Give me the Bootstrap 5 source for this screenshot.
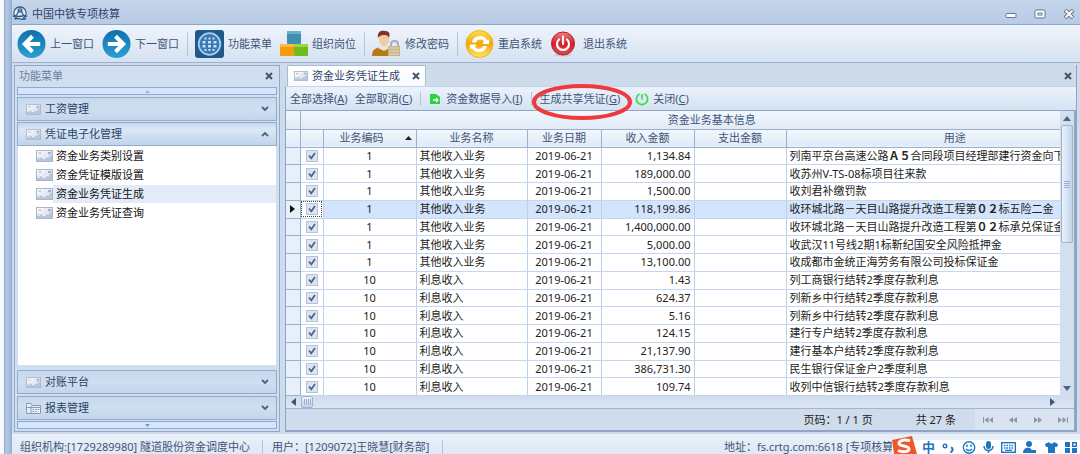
<!DOCTYPE html>
<html lang="zh-CN">
<head>
<meta charset="utf-8">
<meta name="viewport" content="width=device-width, initial-scale=1">
<title>中国中铁专项核算</title>
<link href="https://cdn.jsdelivr.net/npm/bootstrap@5.3.0/dist/css/bootstrap.min.css" rel="stylesheet">
<style>
  body { font-family: "Noto Sans", "Noto Sans CJK SC", sans-serif; font-size: 11px; line-height: 16px; color: #3f5478; background: #f7f8fa; }
  button { font: inherit; color: inherit; background: none; border: 0; padding: 0; white-space: nowrap; }
  svg { display: block; flex: none; }
  .edge { width: 4px; }
  .window { border-left: 1px solid #93a9c9; background: #cddbec; }
  .frame { width: 7px; background: linear-gradient(90deg, #b4c8e2, #a6bddb 70%, #8fa8cb); }
  .titlebar { height: 24px; background: linear-gradient(#c5d5ea, #b8cbe5); padding: 4px 5px 0 8px; color: #2f4468; }
  .titlebar nav { gap: 17px; }
  .brand { gap: 4px; }
  .main-tools { height: 39px; padding: 0 5px; background: linear-gradient(#eef4fc, #e3ebf6 50%, #d5e2f1); border-top: 1px solid #8fa5c3; border-bottom: 1px solid #9db1cd; }
  .tool { display: flex; align-items: center; gap: 4px; margin-right: 8px; }
  .vline { width: 1px; background: #b4c4da; margin-right: 7px; }
  .work { padding: 2px 3px 2px 2px; gap: 5px; }
  .menu-pane { width: 266px; border: 1px solid #8fa9cc; background: #d0deef; padding: 0 2px 2px; }
  .pane-title { height: 21px; padding: 0 4px 2px 2px; color: #6b7d99; }
  .scroller { height: 8px; border: 1px solid #8fabd3; background: #d6e5fb; margin-bottom: 1px; }
  .scroller svg { margin: auto; }
  .group-head { height: 24px; border: 1px solid #94abcb; background: linear-gradient(#c6d8ec, #cfdff0 50%, #c3d6ea); padding: 0 7px 0 8px; margin-top: 1px; text-align: left; width: 100%; color: #2c4266; gap: 4px; }
  .group-head.opened { background: linear-gradient(#c3d7ed, #dbe8f5 30%, #bfd3ea); }
  .group-list { background: #fff; margin: 0 1px 3px; list-style: none; padding: 0 0 0 18px; }
  .group-list ~ .group-head { margin-top: 2px; }
  .group-list ~ .scroller { margin: 1px 0 0; }
  .group-list li { height: 19px; display: flex; align-items: center; }
  .group-list a { color: #111; text-decoration: none; flex: 1; line-height: 18px; padding-left: 3px; }
  .group-list .chosen a { background: #e2ebf7; }
  .doc-pane { border-right: 1px solid #8fa5c3; border-bottom: 1px solid #8fa5c3; }
  .tabstrip { height: 21px; padding: 0 4px 0 2px; background: #cedbeb; }
  .doc-tab { background: linear-gradient(#fff, #f7fafe); border: 1px solid #a9bcd6; border-bottom: 0; width: 139px; padding: 0 5px; gap: 3px; color: #2f4468; }
  .doc-tools { height: 24px; border-top: 1px solid #c5d3e6; background: linear-gradient(#eaf2fc, #d5e2f1); padding: 0 4px; border-left: 1px solid #8fa5c3; }
  .doc-tools .vline { height: 14px; margin: 0 8px; }
  .ring { position: absolute; left: -9px; top: -9px; z-index: 2; pointer-events: none; }
  .grid-area { border: 1px solid #8fa5c3; border-right-width: 2px; }
  /* the last column runs on under the vertical scroll bar */
  .ledger { width: calc(100% + 63px); height: 285px; table-layout: fixed; border-collapse: collapse; background: #fff; color: #222; }
  .ledger th, .ledger td { height: 17px; padding: 0 3px; line-height: 16px; white-space: nowrap; overflow: hidden; border-right: 1px solid #b9d0ee; border-bottom: 1px solid #c3d8f0; }
  .ledger th { height: 18px; font-weight: 400; text-align: center; color: #3f5478; background: linear-gradient(#f2f7fd, #dfeaf6); border-color: #9bb0cd; position: relative; }
  .ledger th:last-child, .ledger td:last-child { border-right: 0; }
  .ledger .handle { background: #e6f0fb; border-color: #9bb0cd; padding: 0 4px; }
  .ledger .current td { background: #d3e5fc; }
  .ledger .current td.handle { background: #e6f0fb; }
  .ledger .current td.tick { outline: 1px dotted #444; outline-offset: -2px; background: #fff; }
  .ledger .tick { padding: 0; text-align: center; }
  .ledger input { appearance: none; display: block; width: 12px; height: 12px; margin: 0 auto; border: 1px solid #b7c4d8; background: #dbe4f0; }
  .ledger input:checked { background-image: url("data:image/svg+xml,%3Csvg xmlns='http://www.w3.org/2000/svg' viewBox='0 0 10 10'%3E%3Cpath d='M2 4.5L4.3 7.3L8 2' fill='none' stroke='%234c6285' stroke-width='1.7'/%3E%3C/svg%3E"); }
  .sort { position: absolute; right: 4px; top: 6px; }
  .vbar { width: 14px; background: #d3dfef; padding: 5px 0; }
  .vthumb { height: 118px; width: 12px; border: 1px solid #9fb3d0; border-radius: 2px; background: linear-gradient(90deg, #eaf2fc, #c3d4ea); margin-top: 4px; }
  .hbar { height: 13px; background: linear-gradient(#cfdcec, #dbe6f3); padding: 0 19px 0 5px; border-bottom: 1px solid #a2b5d0; }
  .hthumb { width: 12px; height: 12px; border: 1px solid #9fb3d0; border-radius: 2px; background: linear-gradient(#eaf2fc, #c3d4ea); margin-left: 5px; }
  .pager { background: #d0dceb; color: #222; }
  .pager nav { background: #dae4f1; padding: 0 6px 0 8px; gap: 15px; }
  .status { height: 20px; padding: 6px 0 0 8px; background: linear-gradient(#e9f0f9, #dfe8f4); white-space: nowrap; }
  .status .vline { height: 14px; margin: 0 9px 0 12px; }
  .address { width: 356px; }
  .ime { right: 0; bottom: 0; width: 188px; height: 14px; background: #fff; color: #1f74c4; padding-left: 30px; padding-right: 3px; }
  .ime-logo { position: absolute; left: 0; bottom: 0; }
  .ime b { font-size: 13px; line-height: 14px; }
  .ime b span { font-family: "Noto Sans CJK SC", sans-serif; }
</style>
</head>
<body>
<svg width="0" height="0" class="position-absolute" aria-hidden="true">
  <defs>
    <linearGradient id="blueBall" x2="0" y2="1"><stop stop-color="#0f6fac"/><stop offset="1" stop-color="#2ba0d3"/></linearGradient>
    <linearGradient id="goldBall" x2="0" y2="1"><stop stop-color="#ffe14a"/><stop offset=".5" stop-color="#f4a60c"/><stop offset="1" stop-color="#ffe75c"/></linearGradient>
    <linearGradient id="redBall" x2="0" y2="1"><stop stop-color="#f07f7d"/><stop offset=".5" stop-color="#d3202a"/><stop offset="1" stop-color="#e04a4c"/></linearGradient>
    <linearGradient id="paper" x2="1" y2="1"><stop stop-color="#fff"/><stop offset=".5" stop-color="#e3e9f2"/><stop offset="1" stop-color="#a3b3cd"/></linearGradient>
    <symbol id="letter" viewBox="0 0 17 12"><rect x=".5" y=".5" width="16" height="11" fill="url(#paper)" stroke="#a9b5c9"/><path d="M1 11V9L5 6L8 9L16 5V11Z" fill="#b9c5d9"/><path d="M3 9L5 6L8 9L11 6L13 7" fill="none" stroke="#f7f9fc"/><path d="M2.500 3H5" stroke="#9aa7be"/><rect x="12" y="2" width="3" height="2" fill="#a2afc8"/></symbol>
    <symbol id="cross" viewBox="0 0 8 8"><path d="M1 1L7 7M7 1L1 7" stroke="#42536e" stroke-width="1.900"/></symbol>
    <symbol id="chevron" viewBox="0 0 8 6"><path d="M1 1L4 4L7 1" fill="none" stroke="#4b6387" stroke-width="1.800"/></symbol>
  </defs>
</svg>

<div class="d-flex vh-100 overflow-hidden position-relative">
  <div class="edge flex-shrink-0"></div>
  <div class="window d-flex flex-grow-1" style="min-width:0">
    <div class="frame flex-shrink-0"></div>
    <div class="d-flex flex-column flex-grow-1" style="min-width:0">

      <header class="titlebar d-flex align-items-center ps-0">
        <div class="brand d-flex align-items-center flex-grow-1">
          <svg width="16" height="16" viewBox="0 0 16 16"><circle cx="8" cy="7.500" r="6.600" fill="#dce8f6"/><path d="M5 12.500A6.200 6.200 0 1 1 11 12.500M6.300 2.500V6L4.500 9M9.700 2.500V6L11.500 9M6.300 6H9.700M8 1V6" fill="none" stroke="#2c5585" stroke-width="1.200"/><path d="M1 10.500C4 8.500 6 11 8 10.500C11 9.500 12 9 15 10.500M2.500 13C6 11.500 10 14.500 14 12.500" fill="none" stroke="#2c5585" stroke-width="1.500"/></svg>
          <span>中国中铁专项核算</span>
        </div>
        <nav class="d-flex align-items-center">
          <button aria-label="最小化"><svg width="12" height="10" viewBox="0 0 12 10"><rect x="1" y="4.500" width="10" height="4" rx="1" fill="#fff" stroke="#66758d"/></svg></button>
          <button aria-label="还原"><svg width="12" height="10" viewBox="0 0 12 10"><rect x="1" y="1" width="10" height="8" rx="1" fill="#fff" stroke="#66758d"/><rect x="4" y="4" width="4" height="2" fill="#fff" stroke="#66758d"/></svg></button>
          <button aria-label="关闭"><svg width="12" height="10" viewBox="0 0 12 10"><path d="M2 1L10 9M10 1L2 9" stroke="#66758d" stroke-width="4"/><path d="M2.500 1.500L9.500 8.500M9.500 1.500L2.500 8.500" stroke="#fff" stroke-width="2"/></svg></button>
        </nav>
      </header>

      <div class="main-tools d-flex align-items-center">
        <button class="tool"><svg width="29" height="30" viewBox="0 0 30 30"><circle cx="15" cy="15" r="14.500" fill="url(#blueBall)"/><path d="M16 7L8 15L16 23M8.500 15H24" fill="none" stroke="#fff" stroke-width="4.200"/></svg>上一窗口</button>
        <button class="tool"><svg width="29" height="30" viewBox="0 0 30 30"><circle cx="15" cy="15" r="14.500" fill="url(#blueBall)"/><path d="M14 7L22 15L14 23M21.500 15H6" fill="none" stroke="#fff" stroke-width="4.200"/></svg>下一窗口</button>
        <span class="vline" style="height:24px"></span>
        <button class="tool"><svg width="29" height="28" viewBox="0 0 29 28"><rect width="29" height="28" rx="3" fill="#1f5a8b"/><circle cx="14.500" cy="14" r="10.800" fill="#3c78b0" stroke="#a9cdf0" stroke-width="1.800"/><path d="M9.500 7.500h2v2h-2zM13.500 7.500h2v2h-2zM17.500 7.500h2v2h-2zM7.500 11h3v2.500h-3zM13 11h3v2.500h-3zM18.500 11h3v2.500h-3zM7.500 15h3v2.500h-3zM13 15h3v2.500h-3zM18.500 15h3v2.500h-3zM9.500 19h2v2h-2zM13.500 19h2v2h-2zM17.500 19h2v2h-2z" fill="#c5e2fb"/></svg>功能菜单</button>
        <button class="tool"><svg width="28" height="27" viewBox="0 0 28 27"><rect x="7" y="1" width="14" height="13" rx="1" fill="#3f8fb0"/><rect x="7" y="1" width="14" height="3" fill="#6cb0ca"/><rect x="0" y="14" width="14" height="12" rx="1" fill="#f39a0e"/><rect x="0" y="14" width="14" height="3" fill="#fbbb3d"/><rect x="14" y="14" width="14" height="12" rx="1" fill="#6fba1d"/><rect x="14" y="14" width="14" height="3" fill="#9ad646"/></svg>组织岗位</button>
        <span class="vline" style="height:24px"></span>
        <button class="tool"><svg width="29" height="27" viewBox="0 0 29 27"><path d="M0 26C0 19 4 18 9 17H15C18 18 19 19 19 26Z" fill="#b97a16"/><path d="M6 18L10 14H14L18 18L12 21Z" fill="#e8e3dc"/><ellipse cx="12" cy="9" rx="5" ry="7" fill="#f1c9a2"/><path d="M6 8C5 1 10 0 13 1C18 1 18 4 17 8C16 5 14 5 12 5C9 5 7 6 6 8Z" fill="#7c3526"/><path d="M19 17V14C19 10 26 10 26 14V17" fill="none" stroke="#a8b0b8" stroke-width="2"/><rect x="16" y="16" width="12" height="10" fill="#c9b48a"/><path d="M17 18H27M17 21H27M17 24H27" stroke="#e7dabd"/></svg>修改密码</button>
        <span class="vline" style="height:24px"></span>
        <button class="tool"><svg width="29" height="28" viewBox="0 0 29 28"><circle cx="14.500" cy="14" r="13.500" fill="url(#goldBall)" stroke="#e8b116"/><path d="M7 12.500C8 5 19 4 22 10L24 9.500V14H17.500L19 11.500C17 8.500 12 9 11 12.500Z" fill="#fff"/><path d="M22 16C21 23.500 10 24 7 18.500L5 19V14.500H11.500L10 17C12 20 17 19.500 18 16Z" fill="#fff"/></svg>重启系统</button>
        <button class="tool" style="gap:7px"><svg width="26" height="26" viewBox="0 0 26 26"><ellipse cx="13" cy="24" rx="9" ry="1.500" fill="#c4cad6"/><circle cx="13" cy="12.500" r="11.500" fill="url(#redBall)" stroke="#b91e28"/><path d="M9 8.500A6 6 0 1 0 17 8.500M13 5.500V13" fill="none" stroke="#fff" stroke-width="2.200" stroke-linecap="round"/></svg>退出系统</button>
      </div>

      <main class="work d-flex flex-grow-1" style="min-height:0">
        <aside class="menu-pane d-flex flex-column flex-shrink-0">
          <div class="pane-title d-flex align-items-center justify-content-between"><span>功能菜单</span><button aria-label="关闭菜单"><svg width="8" height="8"><use href="#cross"/></svg></button></div>
          <div class="scroller d-flex"><svg width="5" height="3"><path d="M0 3L2.500 0L5 3Z" fill="#9fb3d3"/></svg></div>
          <button class="group-head d-flex align-items-center"><svg width="15" height="11"><use href="#letter"/></svg><span class="flex-grow-1">工资管理</span><svg width="8" height="6"><use href="#chevron"/></svg></button>
          <button class="group-head opened d-flex align-items-center" aria-expanded="true"><svg width="15" height="11"><use href="#letter"/></svg><span class="flex-grow-1">凭证电子化管理</span><svg width="8" height="6" viewBox="0 0 8 6"><path d="M1 5L4 2L7 5" fill="none" stroke="#4b6387" stroke-width="1.800"/></svg></button>
          <ul class="group-list flex-grow-1">
            <li><svg width="17" height="12"><use href="#letter"/></svg><a href="#">资金业务类别设置</a></li>
            <li><svg width="17" height="12"><use href="#letter"/></svg><a href="#">资金凭证模版设置</a></li>
            <li class="chosen"><svg width="17" height="12"><use href="#letter"/></svg><a href="#">资金业务凭证生成</a></li>
            <li><svg width="17" height="12"><use href="#letter"/></svg><a href="#">资金业务凭证查询</a></li>
          </ul>
          <button class="group-head d-flex align-items-center"><svg width="15" height="11"><use href="#letter"/></svg><span class="flex-grow-1">对账平台</span><svg width="8" height="6"><use href="#chevron"/></svg></button>
          <button class="group-head d-flex align-items-center"><svg width="15" height="11" viewBox="0 0 15 11"><path d="M.5 .5H5L6 2.500H14.500V10.500H.5Z" fill="#e8eef8" stroke="#8798b8"/><path d="M1 4.500H14M5 3V10M6.500 6.500H8M9 6.500H10.500M11.500 6.500H13M6.500 8.500H8M9 8.500H10.500" stroke="#8798b8"/></svg><span class="flex-grow-1">报表管理</span><svg width="8" height="6"><use href="#chevron"/></svg></button>
          <div class="scroller d-flex"><svg width="5" height="3"><path d="M0 0L2.500 3L5 0Z" fill="#7f95b8"/></svg></div>
        </aside>

        <section class="doc-pane d-flex flex-column flex-grow-1" style="min-width:0">
          <div class="tabstrip d-flex align-items-stretch justify-content-between flex-shrink-0">
            <div class="doc-tab d-flex align-items-center"><svg width="16" height="10"><use href="#letter"/></svg><span class="flex-grow-1">资金业务凭证生成</span><button aria-label="关闭标签"><svg width="8" height="8"><use href="#cross"/></svg></button></div>
            <button aria-label="关闭页面"><svg width="8" height="8"><use href="#cross"/></svg></button>
          </div>
          <div class="doc-tools d-flex align-items-center flex-shrink-0">
            <button>全部选择(<u>A</u>)</button>
            <button style="margin-left:7px">全部取消(<u>C</u>)</button>
            <span class="vline"></span>
            <button class="d-flex align-items-center" style="gap:5px"><svg width="12" height="12" viewBox="0 0 12 12"><path d="M1 1H7L11 4V11H1Z" fill="#2bd43b"/><path d="M4 7H9M7 5L9 7L7 9" fill="none" stroke="#fff" stroke-width="1.300"/></svg><span>资金数据导入(<u>I</u>)</span></button>
            <span class="vline"></span>
            <button class="position-relative">生成共享凭证(<u>G</u>)<svg class="ring" width="102" height="40" viewBox="0 0 102 40"><ellipse cx="51" cy="20" rx="48" ry="16" fill="none" stroke="#ee3a3c" stroke-width="4"/></svg></button>
            <button class="d-flex align-items-center" style="gap:4px;margin-left:15px"><svg width="14" height="14" viewBox="0 0 14 14"><path d="M4.500 2A5.600 5.600 0 1 0 9.500 2M7 2V7.500" fill="none" stroke="#3ddc4c" stroke-width="1.700"/></svg><span>关闭(<u>C</u>)</span></button>
          </div>
          <div class="grid-area flex-grow-1 d-flex flex-column" style="min-height:0">
            <div class="d-flex flex-shrink-0">
              <div class="flex-grow-1 overflow-hidden" style="min-width:0">
                <table class="ledger">
                  <colgroup><col style="width:14px"><col style="width:23px"><col style="width:93px"><col style="width:111px"><col style="width:74px"><col style="width:93px"><col style="width:92px"><col></colgroup>
                  <thead>
                    <tr><th></th><th colspan="7">资金业务基本信息</th></tr>
                    <tr><th></th><th></th><th><span class="pe-3">业务编码</span><svg class="sort" width="7" height="4"><path d="M0 4L3.500 0L7 4Z" fill="#222"/></svg></th><th>业务名称</th><th>业务日期</th><th>收入金额</th><th>支出金额</th><th>用途</th></tr>
                  </thead>
                  <tbody id="rows"></tbody>
                </table>
              </div>
              <div class="vbar d-flex flex-column align-items-center flex-shrink-0">
                <svg width="8" height="5"><path d="M0 5L4 0L8 5Z" fill="#4b6387"/></svg>
                <div class="vthumb d-flex"><svg class="m-auto" width="6" height="7"><path d="M0 .5H6M0 2.500H6M0 4.500H6M0 6.500H6" stroke="#9cb0cd"/></svg></div>
                <svg class="mt-auto" width="8" height="5"><path d="M0 0L4 5L8 0Z" fill="#4b6387"/></svg>
              </div>
            </div>
            <div class="hbar d-flex align-items-center flex-shrink-0">
              <svg width="5" height="8"><path d="M5 0L0 4L5 8Z" fill="#3f5478"/></svg>
              <div class="hthumb d-flex"><svg class="m-auto" width="7" height="6"><path d="M.5 0V6M2.500 0V6M4.500 0V6M6.500 0V6" stroke="#9cb0cd"/></svg></div>
              <svg class="ms-auto" width="5" height="8"><path d="M0 0L5 4L0 8Z" fill="#3f5478"/></svg>
            </div>
            <div class="pager d-flex align-items-stretch justify-content-end flex-grow-1">
              <span class="align-self-center">页码：1 / 1 页</span>
              <span class="align-self-center" style="margin:0 19px 0 43px">共 27 条</span>
              <nav class="d-flex align-items-center">
                <button aria-label="首页"><svg width="10" height="6"><path d="M.5 0V6" stroke="#8a96aa"/><path d="M5.500 0V6L1.500 3ZM10 0V6L6 3Z" fill="#8a96aa"/></svg></button>
                <button aria-label="上一页"><svg width="10" height="6"><path d="M5 0V6L1 3ZM9 0V6L5 3Z" fill="#8a96aa"/></svg></button>
                <button aria-label="下一页"><svg width="10" height="6"><path d="M1 0V6L5 3ZM5 0V6L9 3Z" fill="#8a96aa"/></svg></button>
                <button aria-label="末页"><svg width="10" height="6"><path d="M9.500 0V6" stroke="#8a96aa"/><path d="M0 0V6L4 3ZM4.500 0V6L8.500 3Z" fill="#8a96aa"/></svg></button>
              </nav>
            </div>
          </div>
        </section>
      </main>

      <footer class="status d-flex align-items-center flex-shrink-0">
        <span>组织机构:[1729289980] 隧道股份资金调度中心</span><span class="vline"></span>
        <span>用户：[1209072]王晓慧[财务部]</span><span class="vline"></span>
        <span class="address ms-auto">地址：fs.crtg.com:6618 [专项核算</span>
      </footer>
    </div>
  </div>

  <div class="ime position-absolute d-flex align-items-center justify-content-between">
    <svg class="ime-logo" width="25" height="18" viewBox="0 0 25 18"><path d="M0 4L20 0L25 18H2Z" fill="#f0562b"/><path d="M18 5C14 3 7 4 7 7.500C7 11 17 9 17 13C17 16 10 16.500 6 14.500" fill="none" stroke="#fff" stroke-width="3"/></svg>
    <b><span>中</span></b>
    <svg width="12" height="12" viewBox="0 0 12 12"><circle cx="3" cy="5" r="1.800" fill="none" stroke="#1f74c4" stroke-width="1.400"/><path d="M9 6.500C11.500 7 11 10 8.500 11.500" fill="none" stroke="#1f74c4" stroke-width="2"/></svg>
    <svg width="14" height="13" viewBox="0 0 14 13"><circle cx="7" cy="6.500" r="5.700" fill="none" stroke="#1f74c4" stroke-width="1.400"/><path d="M5 3.500V6M9 3.500V6M4 8C5.500 10 8.500 10 10 8" fill="none" stroke="#1f74c4" stroke-width="1.400"/></svg>
    <svg width="11" height="12" viewBox="0 0 11 12"><rect x="3" y="0" width="5" height="8" rx="2.500" fill="#1f74c4"/><path d="M1 5C1 11 10 11 10 5M5.500 9V12" fill="none" stroke="#1f74c4" stroke-width="1.500"/></svg>
    <svg width="15" height="11" viewBox="0 0 15 11"><rect x=".7" y=".7" width="13.600" height="9.600" fill="none" stroke="#1f74c4" stroke-width="1.400"/><path d="M3 3.500H12M3 6H12" stroke="#1f74c4" stroke-width="1.500" stroke-dasharray="1.500 1"/><path d="M4 8.300H11" stroke="#1f74c4" stroke-width="1.300"/></svg>
    <svg width="14" height="12" viewBox="0 0 14 12"><circle cx="6" cy="3" r="3" fill="#1f74c4"/><path d="M0 12C0 7 4 6 7 7L9 9H13V12Z" fill="#1f74c4"/></svg>
    <svg width="13" height="12" viewBox="0 0 13 12"><path d="M4 1C5 3 8 3 9 1L13 3L12 6H10V12H3V6H1L0 3Z" fill="#1f74c4"/></svg>
    <svg width="12" height="12" viewBox="0 0 12 12"><path d="M0 1H5V6H0ZM0 7H5V12H0ZM7 7H12V12H7Z" fill="#1f74c4"/><path d="M7.700 1.700H11.300V5.300H7.700Z" fill="none" stroke="#1f74c4" stroke-width="1.400"/></svg>
  </div>
</div>

<script src="https://cdn.jsdelivr.net/npm/bootstrap@5.3.0/dist/js/bootstrap.bundle.min.js"></script>
<script>
  const records = [
    [1, "1,134.84", "列南平京台高速公路<b>Ａ５</b>合同段项目经理部建行资金向下"],
    [1, "189,000.00", "收苏州V-TS-08标项目往来款"],
    [1, "1,500.00", "收刘君补缴罚款"],
    [1, "118,199.86", "收环城北路－天目山路提升改造工程第<b>０２</b>标五险二金"],
    [1, "1,400,000.00", "收环城北路－天目山路提升改造工程第<b>０２</b>标承兑保证金"],
    [1, "5,000.00", "收武汉11号线2期1标靳纪国安全风险抵押金"],
    [1, "13,100.00", "收成都市金统正海劳务有限公司投标保证金"],
    [10, "1.43", "列工商银行结转2季度存款利息"],
    [10, "624.37", "列新乡中行结转2季度存款利息"],
    [10, "5.16", "列新乡中行结转2季度存款利息"],
    [10, "124.15", "建行专户结转2季度存款利息"],
    [10, "21,137.90", "建行基本户结转2季度存款利息"],
    [10, "386,731.30", "民生银行保证金户2季度利息"],
    [10, "109.74", "收列中信银行结转2季度存款利息"]
  ];
  const marker = '<svg width="5" height="8"><path d="M0 0L5 4L0 8Z" fill="#111"/></svg>';
  document.getElementById("rows").innerHTML = records.map(([code, income, use], i) => `
    <tr class="${i === 3 ? "current" : ""}">
      <td class="handle">${i === 3 ? marker : ""}</td>
      <td class="tick"><input type="checkbox" checked aria-label="选择第${i + 1}行"></td>
      <td class="text-center">${code}</td>
      <td>${code === 1 ? "其他收入业务" : "利息收入"}</td>
      <td class="text-center">2019-06-21</td>
      <td class="text-end">${income}</td>
      <td></td>
      <td>${use}</td>
    </tr>`).join("");
</script>
</body>
</html>
